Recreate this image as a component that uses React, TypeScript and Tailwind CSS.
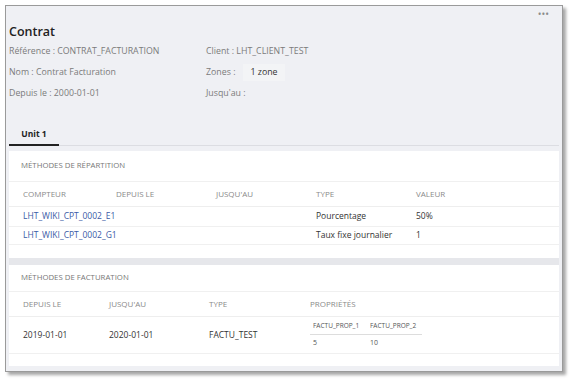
import React from "react";

const font = { fontFamily: '"Open Sans", "Noto Sans", sans-serif' };

function Label({ children }: { children: React.ReactNode }) {
  return <div className="h-[21px] flex items-center text-[8.8px] text-[#7b7b7b]">{children}</div>;
}

export default function App() {
  return (
    <div className="w-[576px] h-[385px] bg-white pl-[5px] pt-[5px]" style={font}>
      <div className="relative w-[558px] h-[367px] border border-[#9a9a9a] bg-[#eff0f4] shadow-[3px_3px_3px_rgba(0,0,0,0.35)] px-[3px]">
        <div className="absolute right-[13px] top-[1px] text-[10px] tracking-[0px] text-[#8a8a8a]">•••</div>
        <div className="pt-[17px]">
          <div className="h-[18px] flex items-center text-[12.5px] font-semibold text-[#222]">Contrat</div>
          <div className="flex">
            <div className="w-[197px]">
              <Label>Référence : CONTRAT_FACTURATION</Label>
              <Label>Nom : Contrat Facturation</Label>
              <Label>Depuis le : 2000-01-01</Label>
            </div>
            <div>
              <Label>Client : LHT_CLIENT_TEST</Label>
              <Label>
                Zones :
                <span className="ml-[8px] h-[17px] px-[7px] flex items-center bg-[#f3f4f6] text-[#333]">1 zone</span>
              </Label>
              <Label>Jusqu'au :</Label>
            </div>
          </div>
        </div>
        <div className="mt-[20px] flex border-b border-[#dcdde2]">
          <div className="w-[50px] h-[22px] flex items-center justify-center text-[8.5px] font-bold text-[#222] border-b-2 border-[#222] -mb-[1px]">
            Unit 1
          </div>
        </div>
        <div className="mt-[5px] bg-white">
          <div className="h-[31px] flex items-center pl-[12px] text-[7.8px] text-[#777] border-b border-[#f0f0f0]">
            MÉTHODES DE RÉPARTITION
          </div>
          <div className="h-[25px] flex items-center pl-[14px] text-[8px] text-[#8a8a8a] border-b border-[#eeeeee]">
            <div className="w-[93px]">COMPTEUR</div>
            <div className="w-[100px]">DEPUIS LE</div>
            <div className="w-[100px]">JUSQU'AU</div>
            <div className="w-[100px]">TYPE</div>
            <div>VALEUR</div>
          </div>
          <div className="h-[20px] flex items-center pl-[14px] text-[8.5px] text-[#333] border-b border-[#f0f0f0]">
            <div className="w-[293px] text-[#3a5aa6]">LHT_WIKI_CPT_0002_E1</div>
            <div className="w-[100px]">Pourcentage</div>
            <div>50%</div>
          </div>
          <div className="h-[18px] flex items-center pl-[14px] text-[8.5px] text-[#333] border-b border-[#f0f0f0]">
            <div className="w-[293px] text-[#3a5aa6]">LHT_WIKI_CPT_0002_G1</div>
            <div className="w-[100px]">Taux fixe journalier</div>
            <div>1</div>
          </div>
          <div className="h-[13px]" />
        </div>
        <div className="h-[7px] bg-[#e6e7eb]" />
        <div className="bg-white">
          <div className="h-[27px] flex items-center pl-[12px] text-[7.8px] text-[#777] border-b border-[#f0f0f0]">
            MÉTHODES DE FACTURATION
          </div>
          <div className="h-[25px] flex items-center pl-[14px] text-[8px] text-[#8a8a8a] border-b border-[#eeeeee]">
            <div className="w-[86px]">DEPUIS LE</div>
            <div className="w-[100px]">JUSQU'AU</div>
            <div className="w-[101px]">TYPE</div>
            <div>PROPRIÉTÉS</div>
          </div>
          <div className="h-[37px] flex items-center pl-[14px] text-[8.5px] text-[#333] border-b border-[#f0f0f0]">
            <div className="w-[86px]">2019-01-01</div>
            <div className="w-[100px]">2020-01-01</div>
            <div className="w-[101px]">FACTU_TEST</div>
            <div className="flex flex-col w-[112px] text-[6.5px] text-[#555]">
              <div className="flex h-[16px] items-center border-b border-[#dddddd] pl-[3px]">
                <div className="w-[57px]">FACTU_PROP_1</div>
                <div>FACTU_PROP_2</div>
              </div>
              <div className="flex h-[17px] items-center pl-[3px] text-[7px]">
                <div className="w-[57px]">5</div>
                <div>10</div>
              </div>
            </div>
          </div>
          <div className="h-[12px]" />
        </div>
      </div>
    </div>
  );
}
